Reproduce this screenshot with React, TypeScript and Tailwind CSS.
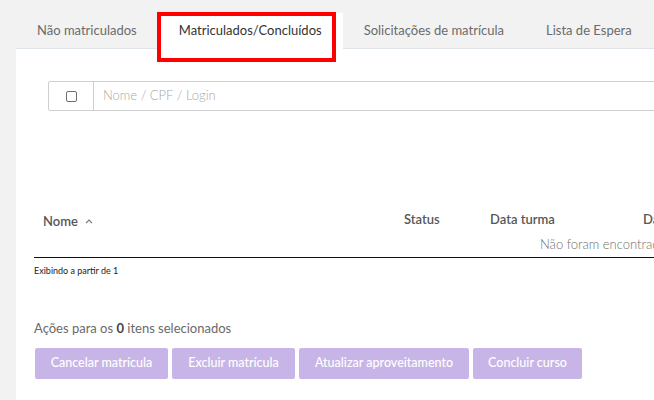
import React from "react";

const tabs = [
  { label: "Não matriculados", active: false },
  { label: "Matriculados/Concluídos", active: true },
  { label: "Solicitações de matrícula", active: false },
  { label: "Lista de Espera", active: false },
];

const actions = [
  { label: "Cancelar matrícula", w: "w-[133px]" },
  { label: "Excluir matrícula", w: "w-[123px]" },
  { label: "Atualizar aproveitamento", w: "w-[170px]" },
  { label: "Concluir curso", w: "w-[109px]" },
];

const App = () => {
  return (
    <div className="w-[654px] h-[400px] overflow-hidden bg-[#f2f2f2] font-['Lato',sans-serif]">
      <div className="w-[1000px] pl-4">
        {/* tabs */}
        <div className="flex items-end pt-[14px] border-b border-[#dfe4ea] h-[49px]">
          {tabs.map((t) => (
            <div
              key={t.label}
              className={
                t.active
                  ? "relative h-[36px] -mb-px px-[21px] flex items-center bg-white text-[13px] text-[#333]"
                  : "h-[35px] px-[21px] flex items-center text-[13px] text-[#6b6b6b]"
              }
            >
              {t.label}
              {t.active && (
                <div className="absolute left-[-1px] right-[7px] top-[-1px] bottom-[-13px] border-4 border-[#ff0000]" />
              )}
            </div>
          ))}
        </div>

        {/* panel */}
        <div className="bg-white h-[352px] pt-[32px]">
          {/* search */}
          <div className="ml-[32px] flex h-[30px] border border-[#cfcfcf] rounded-[2px]">
            <div className="w-[45px] flex items-center justify-center border-r border-[#cfcfcf]">
              <div className="w-[11px] h-[11px] border border-[#6f6f6f] rounded-[2px]" />
            </div>
            <div className="pl-[9px] flex items-center text-[13px] font-light text-[#a9a9a9]">
              Nome / CPF / Login
            </div>
          </div>

          {/* table */}
          <div className="ml-[18px] mt-[94px]">
            <div className="flex h-[28px] items-center pt-[2px] text-[13px] font-semibold text-[#575757]">
              <div className="w-[370px] pl-[9px] pt-[3px] flex items-center gap-[7px]">
                Nome
                <svg width="8" height="5" viewBox="0 0 8 5" fill="none">
                  <path d="M1 4.2 L4 1.2 L7 4.2" stroke="#777" strokeWidth="1.2" />
                </svg>
              </div>
              <div className="w-[86px]">Status</div>
              <div className="w-[153px]">Data turma</div>
              <div>Data conclusão</div>
            </div>
            <div className="h-[25px] flex items-center pl-[506px] text-[13px] font-light text-[#6f6f6f] border-b border-[#111]">
              Não foram encontrados registros
            </div>
            <div className="mt-[6px] text-[9px] leading-[14px] text-[#222]">
              Exibindo a partir de 1
            </div>

            <div className="mt-[40px] text-[13px] leading-[20px] text-[#6a6a6a]">
              Ações para os <b className="text-[#444]">0</b> itens selecionados
            </div>
            <div className="mt-[10px] flex gap-[4px] pl-px">
              {actions.map((a) => (
                <div
                  key={a.label}
                  className={`${a.w} h-[31px] rounded-[2px] bg-[#c8b5e7] flex items-center justify-center text-[12.5px] font-medium text-white`}
                >
                  {a.label}
                </div>
              ))}
            </div>
          </div>
        </div>
      </div>
    </div>
  );
};

export default App;
